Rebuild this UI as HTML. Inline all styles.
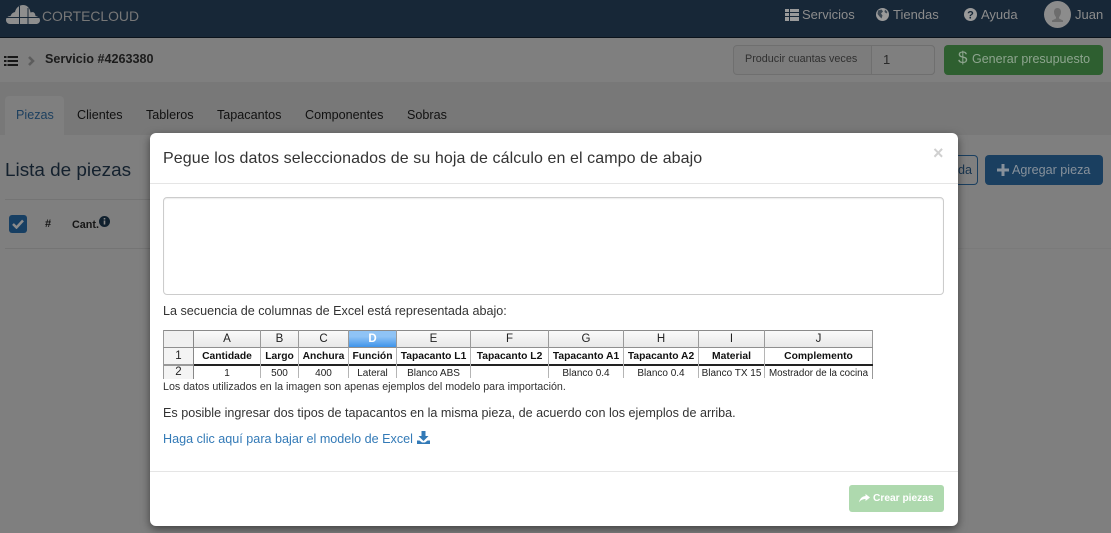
<!DOCTYPE html>
<html><head><meta charset="utf-8">
<style>
*{box-sizing:border-box}
html,body{margin:0;padding:0;width:1111px;height:533px;overflow:hidden;background:#7f7f7f;font-family:"Liberation Sans",sans-serif;font-size:14px;color:#333}
.a{position:absolute;white-space:nowrap}
svg{position:absolute;display:block}
.t{position:absolute;text-align:center;white-space:nowrap;color:#111}
.hd{font-size:11.500px;top:2px;height:14px;line-height:15px;color:#222}
.bd{font-size:10.300px;font-weight:bold;top:20px;height:14px;line-height:14px}
.rw{font-size:10px;top:37px;height:12px;line-height:13px;color:#222}
.v{position:absolute;width:1px;background:#9a9a9a;top:0;height:18px}
.v2{position:absolute;width:1px;background:#b5b5b5;top:18px;height:30px}
.n{font-size:13px;line-height:17px;top:6px;color:#8c8c8c}
.tab{top:107px;font-size:12.600px;line-height:17px;color:#111}
</style></head><body>
<div class="a" style="left:0;top:0;width:1111px;height:37px;background:#172737"></div>
<div class="a" style="left:0;top:37px;width:1111px;height:1px;background:#0b131b"></div>
<svg style="left:6px;top:5px" width="34" height="19" viewBox="0 0 34 19"><path d="M4 19C1.500 19 0 17 0 15C0 12.500 2 11 4.500 11C5.500 8.500 7 7.500 9 7C10 2.500 13.500 0 17 0C21 0 24 3 24.500 7.500C25.500 7 26.500 7 27.500 7.200C29 8 29.500 10 29.500 11C32 11.500 34 13 34 15.200C34 17.500 32 19 30 19Z" fill="#8e8e8e"/><path d="M0 12.500H34M13.500 1V19M22 3V19" stroke="#172737" stroke-width="1" fill="none"/></svg>
<div class="a" style="left:42px;top:7px;font-size:13.900px;line-height:18px;color:#777">CORTECLOUD</div>
<svg style="left:785px;top:9px" width="14" height="12" viewBox="0 0 14 12"><path d="M0 0h14v12H0z" fill="#9a9a9a"/><path d="M0 3.500h14M0 7.500h14M4.500 0v12" stroke="#172737" stroke-width="1"/></svg>
<div class="a n" style="left:802px">Servicios</div>
<svg style="left:876px;top:8px" width="13" height="13" viewBox="0 0 13 13"><circle cx="6.500" cy="6.500" r="6.500" fill="#9a9a9a"/><path d="M2 2.500L5.500 1.500L7 3.500L5 5.500L6.500 7.500L5.500 10.500L3.500 8.500L1.500 6ZM9 1.500L11.500 4L10.500 5.500L8.500 4Z" fill="#3c4853"/></svg>
<div class="a n" style="left:893px">Tiendas</div>
<svg style="left:964px;top:8px" width="13" height="13" viewBox="0 0 13 13"><circle cx="6.500" cy="6.500" r="6.500" fill="#9a9a9a"/><text x="6.500" y="10.500" font-size="11" font-weight="bold" text-anchor="middle" fill="#172737" font-family="Liberation Sans">?</text></svg>
<div class="a n" style="left:981px">Ayuda</div>
<svg style="left:1044px;top:1px" width="27" height="27" viewBox="0 0 27 27"><circle cx="13.500" cy="13.500" r="13.500" fill="#8c8c8c"/><path d="M13.500 7c2.500 0 3.500 2 3.500 4s-1 4-2 5v1.500l4 2V21H8v-1.500l4-2V16c-1-1-2-3-2-5s1-4 3.500-4z" fill="#6d6d6d"/></svg>
<div class="a n" style="left:1075px">Juan</div>

<div class="a" style="left:0;top:38px;width:1111px;height:45px;background:#7f7f7f;border-bottom:1px solid #787878"></div>
<svg style="left:4px;top:55px" width="14" height="12" viewBox="0 0 14 12"><path d="M0 1h2.500v2H0zM0 5h2.500v2H0zM0 9h2.500v2H0zM3.500 1H14v2H3.500zM3.500 5H14v2H3.500zM3.500 9H14v2H3.500z" fill="#171717"/></svg>
<svg style="left:28px;top:56px" width="7" height="10" viewBox="0 0 7 10"><path d="M1 1l4 4-4 4" fill="none" stroke="#5c5c5c" stroke-width="2.500"/></svg>
<div class="a" style="left:45px;top:51px;font-size:12.600px;font-weight:bold;line-height:17px;color:#1c1c1c">Servicio #4263380</div>
<div class="a" style="left:733px;top:45px;width:202px;height:30px;border:1px solid #6f6f6f;border-radius:4px;background:#7c7c7c"></div>
<div class="a" style="left:871px;top:45px;width:64px;height:30px;border:1px solid #6f6f6f;border-radius:0 4px 4px 0;background:#7f7f7f"></div>
<div class="a" style="left:745px;top:52px;font-size:10.800px;line-height:15px;color:#303030">Producir cuantas veces</div>
<div class="a" style="left:883px;top:51px;font-size:13px;line-height:17px;color:#2a2a2a">1</div>
<div class="a" style="left:944px;top:45px;width:159px;height:30px;background:#2e5f30;border-radius:4px"></div>
<div class="a" style="left:958px;top:47px;font-size:17px;line-height:21px;color:#8ea58f">$</div>
<div class="a" style="left:972px;top:51px;font-size:12.500px;line-height:17px;color:#8ea58f">Generar presupuesto</div>

<div class="a" style="left:0;top:83px;width:1111px;height:52px;background:#787878"></div>
<div class="a" style="left:5px;top:96px;width:59px;height:39px;background:#7f7f7f;border-radius:4px 4px 0 0"></div>
<div class="a tab" style="left:16px;color:#1c3f5f">Piezas</div>
<div class="a tab" style="left:77px">Clientes</div>
<div class="a tab" style="left:146px">Tableros</div>
<div class="a tab" style="left:217px">Tapacantos</div>
<div class="a tab" style="left:305px">Componentes</div>
<div class="a tab" style="left:407px">Sobras</div>

<div class="a" style="left:5px;top:159px;font-size:18.900px;line-height:23px;color:#14212e">Lista de piezas</div>
<div class="a" style="left:5px;top:199px;width:145px;height:1px;background:#747474"></div>
<div class="a" style="left:9px;top:215px;width:18px;height:18px;background:#173f63;border-radius:3px"></div>
<svg style="left:12px;top:219px" width="12" height="10" viewBox="0 0 12 10"><path d="M1 5l3.500 3.500L11 1.500" fill="none" stroke="#8c8c8c" stroke-width="2.500"/></svg>
<div class="a" style="left:45px;top:217px;font-size:11px;font-weight:bold;line-height:15px;color:#151515">#</div>
<div class="a" style="left:72px;top:218px;font-size:10.800px;font-weight:bold;line-height:15px;color:#151515">Cant.</div>
<svg style="left:99px;top:216px" width="11" height="11" viewBox="0 0 11 11"><circle cx="5.500" cy="5.500" r="5.500" fill="#10202e"/><path d="M4.700 2h1.600v1.500H4.700zM4.700 4.500h1.600V8.500H4.700z" fill="#888"/></svg>
<div class="a" style="left:5px;top:248px;width:145px;height:1px;background:#747474"></div>
<div class="a" style="left:958px;top:248px;width:153px;height:1px;background:#7a7a7a"></div>

<div class="a" style="left:958px;top:155px;width:20px;height:30px;border:1px solid #1a3f60;border-left:0;border-radius:0 4px 4px 0"></div>
<div class="a" style="left:958px;top:162px;font-size:12.600px;line-height:16px;color:#17344f">da</div>
<div class="a" style="left:985px;top:155px;width:118px;height:30px;background:#1a3f60;border-radius:4px"></div>
<svg style="left:997px;top:164px" width="12" height="12" viewBox="0 0 12 12"><path d="M4.500 0h3v4.500H12v3H7.500V12h-3V7.500H0v-3h4.500z" fill="#87919b"/></svg>
<div class="a" style="left:1012px;top:162px;font-size:12.600px;line-height:17px;color:#87919b">Agregar pieza</div>

<div class="a" style="left:150px;top:133px;width:808px;height:393px;background:#fff;border-radius:6px;box-shadow:0 3px 9px rgba(0,0,0,.5)"></div>
<div class="a" style="left:163px;top:148px;font-size:16px;line-height:22px;color:#333;letter-spacing:.09px">Pegue los datos seleccionados de su hoja de cálculo en el campo de abajo</div>
<div class="a" style="left:933px;top:143px;font-size:18px;font-weight:bold;line-height:20px;color:#d0d0d0">×</div>
<div class="a" style="left:150px;top:183px;width:808px;height:1px;background:#e5e5e5"></div>
<div class="a" style="left:163px;top:197px;width:781px;height:98px;border:1px solid #ccc;border-radius:4px;background:#fff;box-shadow:inset 0 1px 1px rgba(0,0,0,.075)"></div>
<div class="a" style="left:163px;top:304px;font-size:12.600px;line-height:15px;color:#333">La secuencia de columnas de Excel está representada abajo:</div>

<div class="a" style="left:163px;top:330px;width:710px;height:49px;overflow:hidden;background:#fff">
 <div style="position:absolute;left:0;top:0;width:710px;height:1px;background:#8a8a8a"></div>
 <div style="position:absolute;left:0;top:0;width:1px;height:49px;background:#999"></div>
 <div style="position:absolute;left:709px;top:0;width:1px;height:49px;background:#999"></div>
 <div style="position:absolute;left:1px;top:1px;width:29px;height:17px;background:#f0f0f0"></div>
 <div style="position:absolute;left:1px;top:18px;width:29px;height:31px;background:#f4f4f4"></div>
 <div style="position:absolute;left:31px;top:1px;width:678px;height:16px;background:linear-gradient(#fafafa,#e8e8e8)"></div>
 <div style="position:absolute;left:186px;top:1px;width:48px;height:16px;background:linear-gradient(#8fc3f5 0 35%,#3f94ea)"></div>
 <div style="position:absolute;left:0;top:17px;width:710px;height:1px;background:#8f8f8f"></div>
 <div style="position:absolute;left:0;top:34px;width:710px;height:2px;background:#222"></div>
 <div style="position:absolute;left:0;top:34px;width:30px;height:2px;background:#999"></div>
 <div style="position:absolute;left:30px;top:0;width:1px;height:49px;background:#888"></div>
 <div class="v" style="left:97px"></div><div class="v" style="left:135px"></div><div class="v" style="left:185px"></div><div class="v" style="left:233px"></div><div class="v" style="left:307px"></div><div class="v" style="left:385px"></div><div class="v" style="left:460px"></div><div class="v" style="left:535px"></div><div class="v" style="left:601px"></div>
 <div class="v2" style="left:97px"></div><div class="v2" style="left:135px"></div><div class="v2" style="left:185px"></div><div class="v2" style="left:233px"></div><div class="v2" style="left:307px"></div><div class="v2" style="left:385px"></div><div class="v2" style="left:460px"></div><div class="v2" style="left:535px"></div><div class="v2" style="left:601px"></div>
 <div class="t hd" style="left:31px;width:66px">A</div><div class="t hd" style="left:98px;width:37px">B</div><div class="t hd" style="left:136px;width:49px">C</div><div class="t hd" style="left:186px;width:47px;color:#fff;font-weight:bold">D</div><div class="t hd" style="left:234px;width:73px">E</div><div class="t hd" style="left:308px;width:77px">F</div><div class="t hd" style="left:386px;width:74px">G</div><div class="t hd" style="left:461px;width:74px">H</div><div class="t hd" style="left:536px;width:65px">I</div><div class="t hd" style="left:602px;width:107px">J</div>
 <div class="t" style="left:1px;width:29px;top:19px;font-size:11.500px;line-height:15px;color:#222">1</div>
 <div class="t" style="left:1px;width:29px;top:36px;font-size:11.500px;line-height:13px;color:#222">2</div>
 <div class="t bd" style="left:31px;width:66px">Cantidade</div><div class="t bd" style="left:98px;width:37px">Largo</div><div class="t bd" style="left:136px;width:49px">Anchura</div><div class="t bd" style="left:186px;width:47px">Función</div><div class="t bd" style="left:234px;width:73px">Tapacanto L1</div><div class="t bd" style="left:308px;width:77px">Tapacanto L2</div><div class="t bd" style="left:386px;width:74px">Tapacanto A1</div><div class="t bd" style="left:461px;width:74px">Tapacanto A2</div><div class="t bd" style="left:536px;width:65px">Material</div><div class="t bd" style="left:602px;width:107px">Complemento</div>
 <div class="t rw" style="left:31px;width:66px">1</div><div class="t rw" style="left:98px;width:37px">500</div><div class="t rw" style="left:136px;width:49px">400</div><div class="t rw" style="left:186px;width:47px">Lateral</div><div class="t rw" style="left:234px;width:73px">Blanco ABS</div><div class="t rw" style="left:386px;width:74px">Blanco 0.4</div><div class="t rw" style="left:461px;width:74px">Blanco 0.4</div><div class="t rw" style="left:536px;width:65px">Blanco TX 15</div><div class="t rw" style="left:602px;width:107px;font-size:9.800px">Mostrador de la cocina</div>
</div>

<div class="a" style="left:163px;top:380px;font-size:10.700px;line-height:14px;color:#333">Los datos utilizados en la imagen son apenas ejemplos del modelo para importación.</div>
<div class="a" style="left:163px;top:405px;font-size:12.600px;line-height:16px;color:#333">Es posible ingresar dos tipos de tapacantos en la misma pieza, de acuerdo con los ejemplos de arriba.</div>
<div class="a" style="left:163px;top:431px;font-size:12.600px;line-height:16px;color:#337ab7">Haga clic aquí para bajar el modelo de Excel</div>
<svg style="left:417px;top:431px" width="13" height="13" viewBox="0 0 13 13"><path d="M4.500 0h4v5h3l-5 5-5-5h3zM0 9.500h2.500l2.500 2h3l2.500-2H13V13H0z" fill="#337ab7"/></svg>
<div class="a" style="left:150px;top:471px;width:808px;height:1px;background:#e5e5e5"></div>
<div class="a" style="left:849px;top:485px;width:95px;height:27px;background:#aed9ae;border-radius:3px"></div>
<svg style="left:859px;top:494px" width="11" height="9" viewBox="0 0 11 9"><path d="M6.500 0L11 3.500 6.500 7V5C4 5 1.500 6 0 8.500 .5 5 3 2.200 6.500 2z" fill="#fff"/></svg>
<div class="a" style="left:873px;top:491px;font-size:10.200px;font-weight:bold;line-height:15px;color:#fff">Crear piezas</div>
</body></html>
